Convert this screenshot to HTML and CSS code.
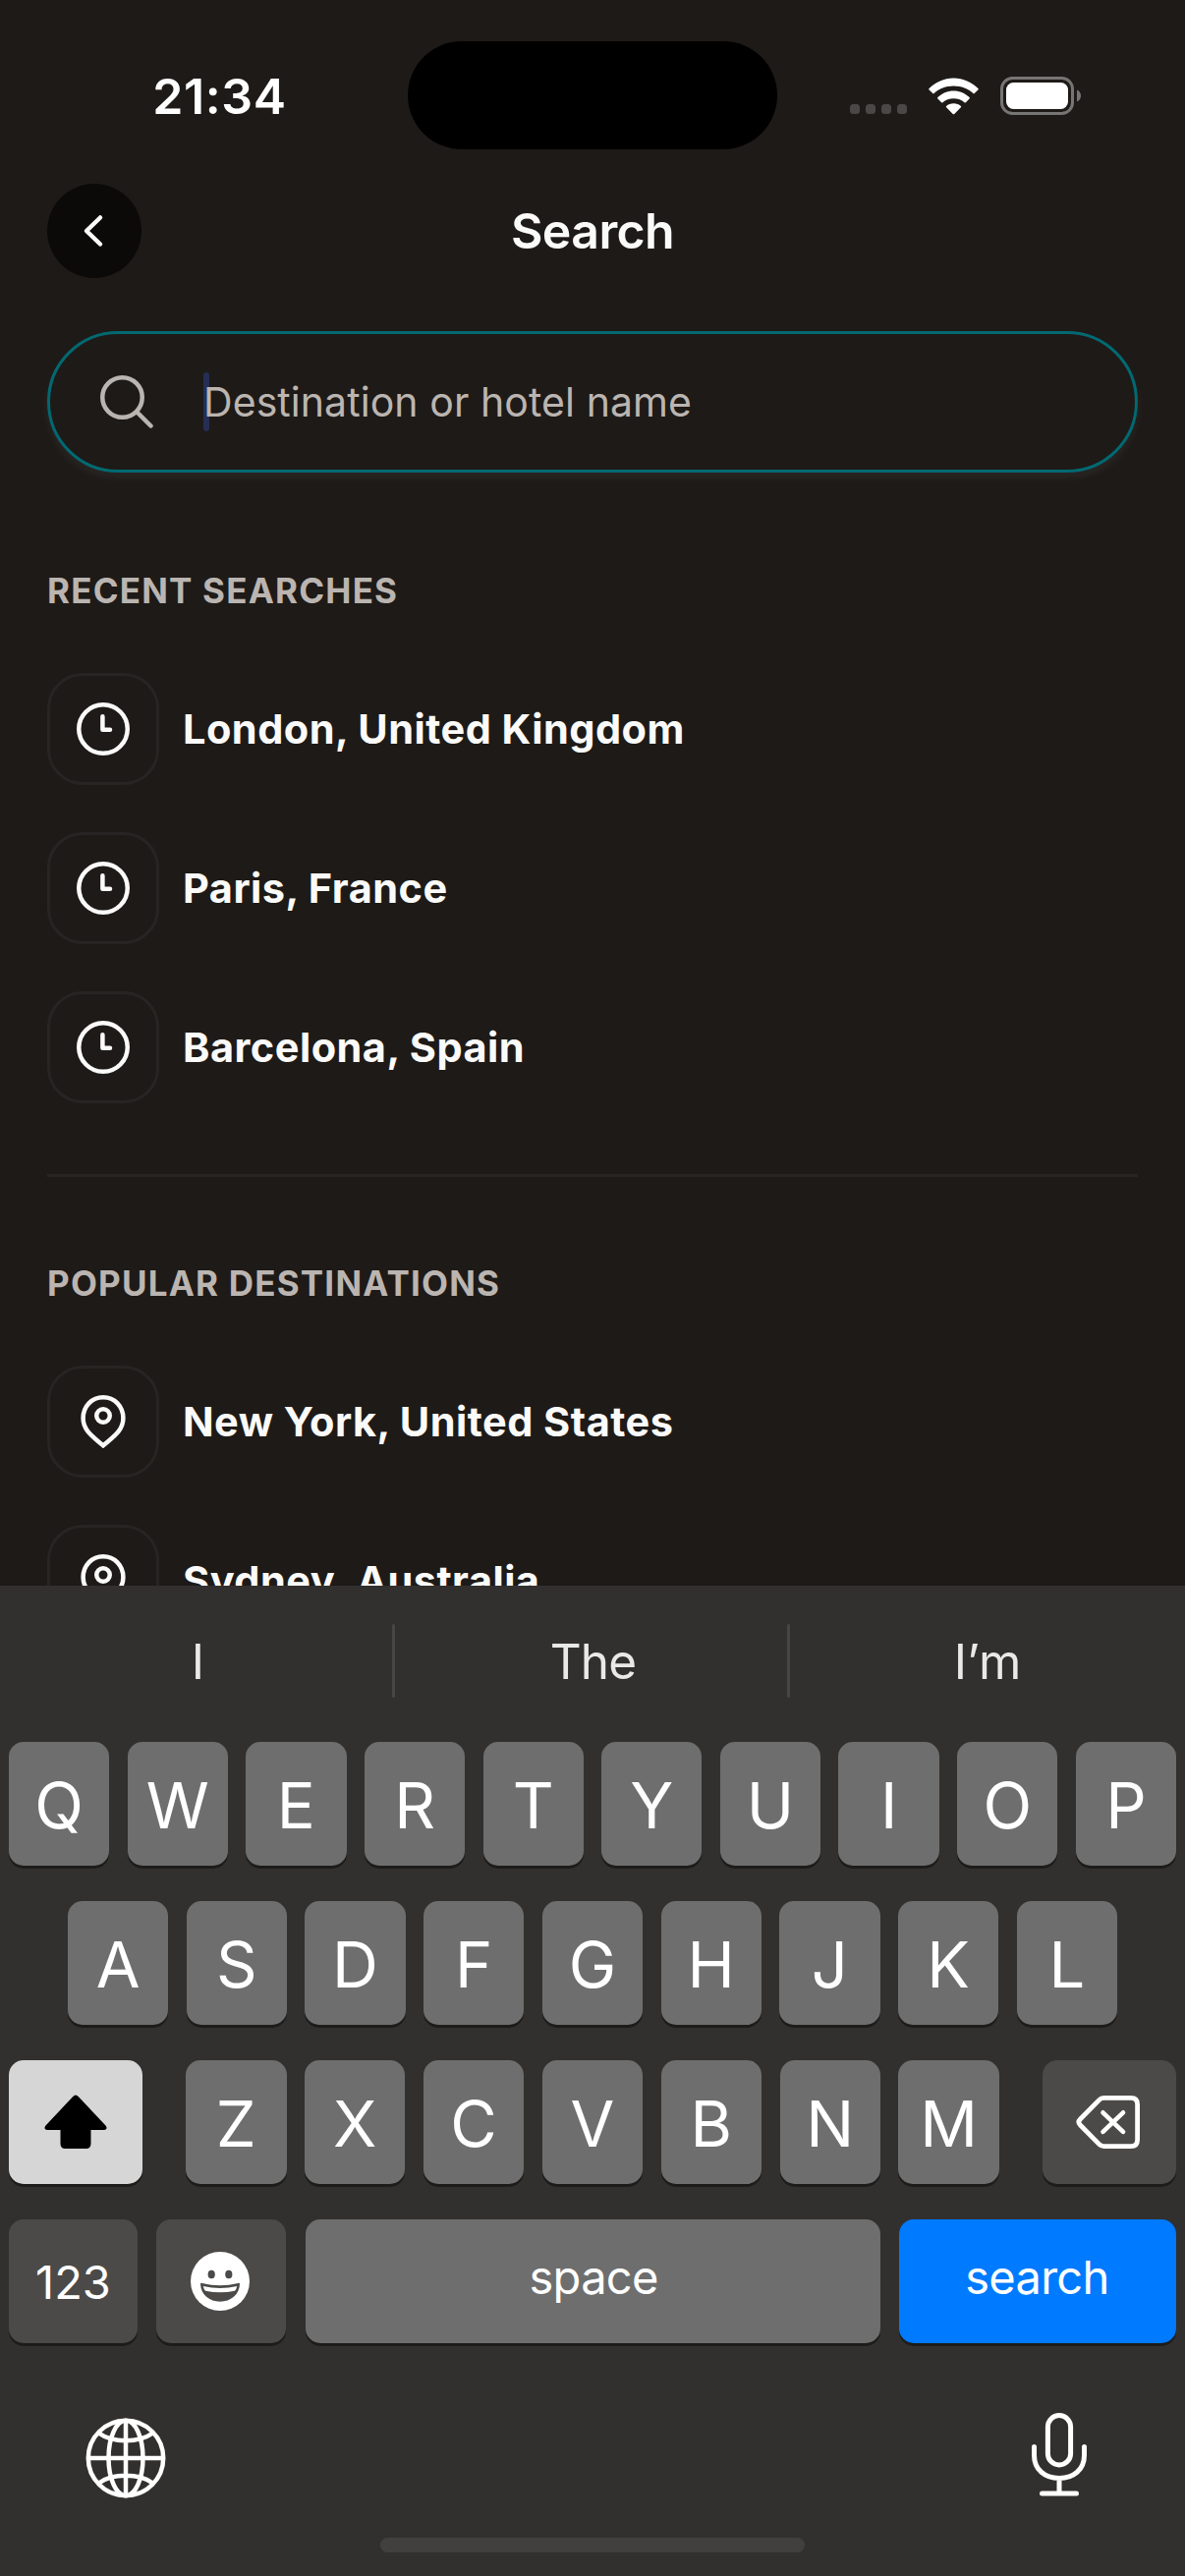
FILE: index.html
```html
<!DOCTYPE html>
<html lang="en">
<head>
<meta charset="utf-8">
<title>Search</title>
<link rel="stylesheet" href="styles.css">
</head>
<body>
<div class="screen">
  <main class="content">
    <div class="status">
      <div class="time">21:34</div>
      <div class="island"></div>
      <div class="indicators">
        <svg width="58" height="38" viewBox="0 0 58 38" fill="#4a4846"><rect y="27" width="10" height="10" rx="3.5"/><rect x="16" y="27" width="10" height="10" rx="3.5"/><rect x="32" y="27" width="10" height="10" rx="3.5"/><rect x="48" y="27" width="10" height="10" rx="3.5"/></svg>
        <svg width="51" height="38" viewBox="0 0 51 38" fill="#fff"><path d="M25.5 .5C35.2 .5 44.1 4.800 50.400 11Q51.100 11.700 50.400 12.400L46.700 16.100Q46.100 16.700 45.400 16.100C40.300 11.200 33.200 8.500 25.500 8.500S10.700 11.200 5.600 16.100Q4.900 16.700 4.300 16.100L.6 12.400Q-.1 11.700.6 11C6.900 4.800 15.800 .5 25.500 .5Z"/><path d="M25.500 13.500C31.800 13.500 37.600 16.200 41.600 20.100Q42.300 20.800 41.600 21.500L37.900 25.200Q37.300 25.800 36.500 25.200C33.700 22.800 29.800 21.300 25.500 21.300S17.300 22.800 14.500 25.200Q13.700 25.800 13.100 25.200L9.400 21.500Q8.700 20.800 9.400 20.100C13.400 16.200 19.200 13.500 25.500 13.500Z"/><path d="M25.500 26.300C28.400 26.300 31 27.300 32.900 28.900Q33.600 29.600 32.900 30.300L26.300 36.900Q25.500 37.600 24.700 36.900L18.100 30.300Q17.400 29.600 18.100 28.900C20 27.300 22.600 26.300 25.500 26.300Z"/></svg>
        <svg width="83" height="39" viewBox="0 0 83 39"><rect x="1.500" y="1.500" width="72" height="36" rx="11" fill="none" stroke="#777573" stroke-width="3"/><rect x="6" y="6" width="63" height="27" rx="7.500" fill="#fff"/><path d="M78 13.500C80.500 14.500 82 16.800 82 19.500S80.500 24.500 78 25.500Z" fill="#777573"/></svg>
      </div>
    </div>
    <header class="header">
      <div class="back"><svg width="96" height="96" viewBox="0 0 96 96"><path d="M54 34.500 40 48 54 61.500" fill="none" stroke="#fafaf9" stroke-width="4.500" stroke-linecap="round" stroke-linejoin="round"/></svg></div>
      <h1 class="title">Search</h1>
    </header>
    <div class="field">
      <svg class="lens" width="54" height="54" viewBox="0 0 54 54" fill="none" stroke="#bbb5b1" stroke-width="4.500" stroke-linecap="round"><circle cx="22.500" cy="22.500" r="20.250"/><path d="M37.500 37.500 51.500 51.500"/></svg>
      <span class="caret"></span>
      <span class="placeholder">Destination or hotel name</span>
    </div>
    <section>
      <h2 class="heading">RECENT SEARCHES</h2>
      <ul class="list">
        <li class="row"><span class="tile"><svg class="icon" viewBox="0 0 54 54"><circle cx="27" cy="27" r="24.750"/><path d="M26.400 14.300V27.700H34"/></svg></span><span class="name">London, United Kingdom</span></li>
        <li class="row"><span class="tile"><svg class="icon" viewBox="0 0 54 54"><circle cx="27" cy="27" r="24.750"/><path d="M26.400 14.300V27.700H34"/></svg></span><span class="name">Paris, France</span></li>
        <li class="row"><span class="tile"><svg class="icon" viewBox="0 0 54 54"><circle cx="27" cy="27" r="24.750"/><path d="M26.400 14.300V27.700H34"/></svg></span><span class="name">Barcelona, Spain</span></li>
      </ul>
    </section>
    <section class="popular">
      <h2 class="heading">POPULAR DESTINATIONS</h2>
      <ul class="list">
        <li class="row"><span class="tile"><svg class="icon pin" viewBox="0 0 54 54"><path d="M27 2.250C15.400 2.250 6.600 11.400 6.600 23.500C6.600 35.500 15.500 41.500 27 51.400C38.500 41.500 47.400 35.500 47.400 23.500C47.400 11.400 38.600 2.250 27 2.250Z"/><circle cx="27" cy="21" r="6.750"/></svg></span><span class="name">New York, United States</span></li>
        <li class="row"><span class="tile"><svg class="icon pin" viewBox="0 0 54 54"><path d="M27 2.250C15.400 2.250 6.600 11.400 6.600 23.500C6.600 35.500 15.500 41.500 27 51.400C38.500 41.500 47.400 35.500 47.400 23.500C47.400 11.400 38.600 2.250 27 2.250Z"/><circle cx="27" cy="21" r="6.750"/></svg></span><span class="name">Sydney, Australia</span></li>
      </ul>
    </section>
  </main>
  <div class="keyboard">
    <div class="suggestions"><span class="first">I</span><i></i><span class="second">The</span><i></i><span>I’m</span></div>
    <div class="keys">
      <div class="keyrow"><b>Q</b><b>W</b><b>E</b><b>R</b><b>T</b><b>Y</b><b>U</b><b>I</b><b>O</b><b>P</b></div>
      <div class="keyrow middle"><b>A</b><b>S</b><b>D</b><b>F</b><b>G</b><b>H</b><b>J</b><b>K</b><b>L</b></div>
      <div class="keyrow lower">
        <b class="shift"><svg width="64" height="56" viewBox="0 0 64 56"><path d="M29 2.200Q32-1 35 2.200L62.500 31.500Q64 33.200 63.300 34.800Q62.600 36 60.500 36H47.500V50Q47.500 55 42.500 55H21.500Q16.500 55 16.500 50V36H3.500Q1.400 36 .7 34.800Q0 33.200 1.500 31.500Z"/></svg></b>
        <div class="letters"><b>Z</b><b>X</b><b>C</b><b>V</b><b>B</b><b>N</b><b>M</b></div>
        <b class="dark delete"><svg width="66" height="54" viewBox="0 0 66 54" fill="none" stroke="#fff" stroke-width="4.800" stroke-linecap="round" stroke-linejoin="round"><path d="M28.500 2.400H56Q62.600 2.400 62.600 9V45Q62.600 51.600 56 51.600H28.500Q25.500 51.600 23.500 49.400L4.400 30Q1.400 27 4.400 24L23.500 4.600Q25.500 2.400 28.500 2.400Z"/><path d="M27.500 17.300 48 36.800M48 17.300 27.500 36.800" stroke-width="4.600"/></svg></b>
      </div>
      <div class="keyrow bottom">
        <b class="dark num">123</b>
        <b class="dark emoji"><svg width="60" height="60" viewBox="0 0 60 60"><circle cx="30" cy="30" r="30" fill="#fff"/><ellipse cx="21.200" cy="23" rx="3.600" ry="4.300" fill="#4b4a48"/><ellipse cx="38.800" cy="23" rx="3.600" ry="4.300" fill="#4b4a48"/><path d="M10 33Q10 31.400 11.800 31.900Q30 36.500 48.200 31.900Q50 31.400 50 33C49.500 43.500 41 50.700 30 50.700S10.500 43.500 10 33Z" fill="#4b4a48"/><path d="M12.800 35Q30 38.800 47.200 35Q46.600 38.200 45 39.800Q30 42.800 15 39.800Q13.400 38.200 12.800 35Z" fill="#fff"/></svg></b>
        <b class="word">space</b>
        <b class="word go">search</b>
      </div>
    </div>
    <div class="tools">
      <svg class="globe" width="82" height="82" viewBox="0 0 82 82" fill="none" stroke="#fff" stroke-width="4.500"><circle cx="41" cy="41" r="38.200"/><ellipse cx="41" cy="41" rx="17.500" ry="38.200"/><path d="M41 3V79M3 41H79M13.500 15.500Q24 23.200 41 23.200T68.500 15.500M13.500 66.500Q24 58.800 41 58.800T68.500 66.500"/></svg>
      <svg width="58" height="86" viewBox="0 0 58 86" fill="none" stroke="#fff" stroke-width="5" stroke-linecap="round"><rect x="17.400" y="2.500" width="23.200" height="50.500" rx="11.600"/><path d="M3.500 34.500V43C3.500 57.500 14 66.500 29 66.500S54.500 57.500 54.500 43V34.500M29 66.500V82M11.500 82H46.500"/></svg>
    </div>
    <div class="home"></div>
  </div>
</div>
</body>
</html>
```

FILE: styles.css
```css
* { box-sizing: border-box; margin: 0; padding: 0; }
body { width: 1206px; height: 2622px; overflow: hidden; background: #1e1a17; font-family: Inter, "Liberation Sans", sans-serif; color: #fafaf9; }
svg { display: block; }
.screen { display: flex; flex-direction: column; height: 2622px; }
.content { height: 1614px; overflow: hidden; padding: 0 48px; }

.status { display: grid; grid-template-columns: 415px 376px 415px; align-items: center; height: 187px; padding: 42px 0 35px; margin: 0 -48px; }
.time { text-align: center; padding: 2px 0 0 32px; font-size: 50px; font-weight: 600; line-height: 60px; letter-spacing: .6px; color: #fff; }
.island { height: 110px; border-radius: 55px; background: #000; }
.indicators { display: flex; align-items: center; gap: 22px; padding: 1px 0 0 74px; }

.header { display: grid; grid-template-columns: 96px 1fr 96px; align-items: center; height: 96px; }
.back { width: 96px; height: 96px; border-radius: 50%; background: #0b0a08; }
.title { text-align: center; font-size: 50px; font-weight: 600; line-height: 60px; letter-spacing: -.6px; }

.field { display: flex; align-items: center; height: 144px; margin-top: 54px; padding-left: 51px; border: 3px solid #026972; border-radius: 72px; box-shadow: 0 6px 9px rgba(255, 255, 255, .05); }
.caret { width: 6px; height: 60px; margin-left: 51px; border-radius: 3px; background: #262e55; }
.placeholder { margin-left: -6px; font-size: 41px; line-height: 60px; letter-spacing: .07px; color: #bbb5b1; }

.heading { height: 49px; margin: 96px 0 59px; font-size: 35px; font-weight: 650; line-height: 49px; letter-spacing: 1.200px; color: #bbb5b1; }
.popular { margin-top: 72px; border-top: 3px solid #272422; }
.popular .heading { margin-top: 84px; }
.list { display: flex; flex-direction: column; gap: 48px; list-style: none; }
.row { display: flex; align-items: center; gap: 24px; height: 114px; }
.tile { display: grid; place-items: center; width: 114px; height: 114px; border: 3px solid #272423; border-radius: 36px; }
.icon { width: 54px; height: 54px; fill: none; stroke: #fafaf9; stroke-width: 4.5px; stroke-linecap: round; stroke-linejoin: round; }
.pin { stroke-linejoin: miter; }
.name { font-size: 41.500px; font-weight: 650; line-height: 60px; letter-spacing: .47px; }

.keyboard { display: flex; flex-direction: column; height: 1008px; background: #32302e; }
.suggestions { display: grid; grid-template-columns: 399px 3px 399px 3px 402px; align-items: center; height: 159px; padding-bottom: 6px; }
.suggestions span { text-align: center; font-size: 49.500px; line-height: 60px; color: #e9e9e8; }
.suggestions .first { padding-left: 4px; }
.suggestions .second { padding-left: 4px; letter-spacing: -.9px; }
.suggestions i { height: 75px; border-radius: 2px; background: #474644; }
.keys { display: flex; flex-direction: column; gap: 36px; padding: 0 9px; }
.keyrow, .letters { display: flex; gap: 18.400px; height: 126px; }
.keyrow b { flex: 1; display: flex; align-items: center; justify-content: center; height: 126px; padding-top: 2px; border-radius: 15px; background: #6e6e6e; box-shadow: 0 3px 0 #1d1c1b; font-size: 65px; font-weight: 400; color: #fff; }
.middle { padding: 0 60px; }
.letters { flex: 1; }
.keyrow.lower { gap: 44px; }
.keyrow .shift, .keyrow .delete { flex: none; width: 136px; padding: 0; }
.keyrow .delete { padding-right: 3px; }
.keyrow .shift { background: #d6d6d6; }
.keyrow .dark { background: #4b4a48; }
.keyrow.bottom { display: grid; grid-template-columns: 131px 132px 585px 282px; gap: 19.300px; }
.bottom b.num { padding: 0; font-size: 47px; }
.bottom b.emoji { padding: 0 2px 0 0; }
.bottom b.word { padding: 0 0 9px 2px; font-size: 47px; letter-spacing: -.7px; }
.bottom b.go { padding-left: 0; padding-right: 1px; background: #007aff; }
.tools { display: flex; justify-content: space-between; align-items: flex-start; height: 86px; margin-top: 70px; padding: 1px 99px 0 87px; }
.globe { margin-top: 5px; }
.home { width: 432px; height: 15px; margin: 42px auto 0; border-radius: 8px; background: #41403f; }
```
